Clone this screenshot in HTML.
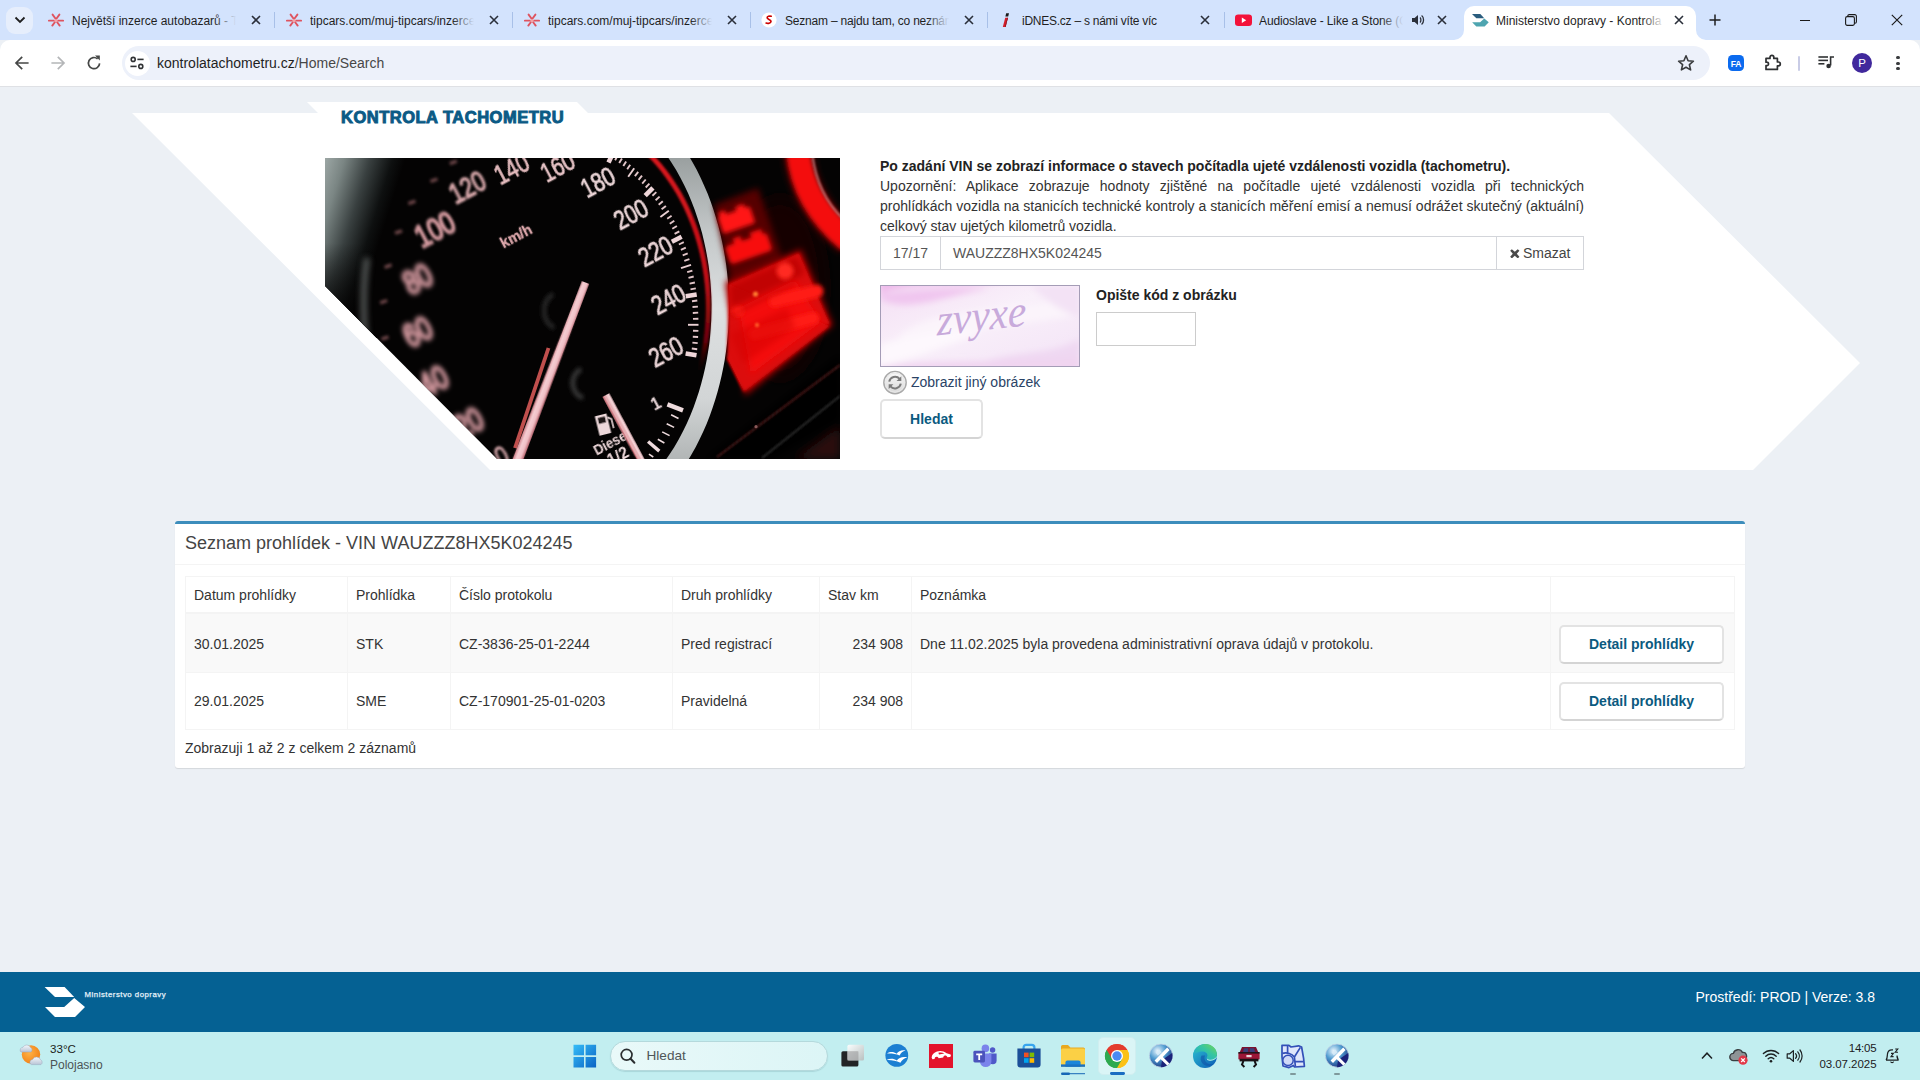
<!DOCTYPE html>
<html lang="cs">
<head>
<meta charset="utf-8">
<title>Ministerstvo dopravy - Kontrola tachometru</title>
<style>
*{box-sizing:border-box;margin:0;padding:0}
html,body{width:1920px;height:1080px;overflow:hidden;background:#ecf0f5;font-family:"Liberation Sans",sans-serif;font-size:14px;color:#333}
.abs{position:absolute}
#root{position:absolute;left:0;top:0;width:1920px;height:1080px;overflow:hidden}
/* ---------- browser chrome ---------- */
#tabbar{left:0;top:0;width:1920px;height:40px;background:#d3e3fd}
#toolbar{left:0;top:40px;width:1920px;height:46px;background:#fff;border-radius:10px 10px 0 0}
#tbline{left:0;top:86px;width:1920px;height:1px;background:#dfe1e5}
#omni{left:122px;top:46px;width:1588px;height:34px;border-radius:17px;background:#edf1fa}
#omni .site{left:2.5px;top:4.5px;width:25px;height:25px;border-radius:13px;background:#fff}
.tabtxt{top:13px;font-size:12px;line-height:16px;color:#1f1f1f;white-space:nowrap;overflow:hidden;height:16px}
.tabsep{top:12px;width:1px;height:16px;background:#a8c0e8}
#acttab{left:1464px;top:6px;width:232px;height:34px;background:#fff;border-radius:10px 10px 0 0}
.dot{left:1896.4px;width:3.2px;height:3.2px;border-radius:2px;background:#3a3c3e}
.url{left:157px;top:54px;font-size:14px;line-height:18px;color:#1f1f1f;white-space:nowrap}
/* ---------- page ---------- */
#page{left:0;top:87px;width:1920px;height:945px;background:#ecf0f5}
.t14{font-size:14px;line-height:20px;color:#333;white-space:nowrap}
.vl{top:577px;width:1px;height:152px;background:#f4f4f4}
.dbtn{left:1559px;width:165px;height:39px;border:2px solid #e3e3e3;border-bottom-color:#d4d4d4;border-radius:5px;background:#fff}
.dtx{left:1559px;width:165px;text-align:center;font-weight:bold;color:#0b5a7f}
/* ---------- footer / taskbar ---------- */
#footer{left:0;top:972px;width:1920px;height:60px;background:#056193}
#taskbar{left:0;top:1032px;width:1920px;height:48px;background:#c2eef0}
</style>
</head>
<body>
<div id="root">

<!-- ================= TAB BAR ================= -->
<div id="tabbar" class="abs"></div>
<div class="abs" style="left:6px;top:7px;width:27px;height:27px;border-radius:9px;background:#e6eefc"></div>
<div id="acttab" class="abs"></div>
<div id="toolbar" class="abs"></div>
<div id="tbline" class="abs"></div>
<div id="omni" class="abs"><div class="abs site"></div></div>
<div class="abs url">kontrolatachometru.cz<span style="color:#474747">/Home/Search</span></div>

<svg class="abs" style="left:14px;top:16px" width="12" height="8" viewBox="0 0 12 8"><path d="M1.5 1.5 L6 6 L10.5 1.5" stroke="#1f1f1f" stroke-width="1.8" fill="none"/></svg>
<svg class="abs" style="left:48px;top:12px" width="16" height="16" viewBox="0 0 16 16"><g stroke="#de5460" stroke-width="1.9" stroke-linecap="round" fill="none"><path d="M4.6 2.6 L8 7.2 L11.4 2.6"/><path d="M0.9 8.6 L6 8.6"/><path d="M10 8.6 L15.1 8.6"/><path d="M7 10 L4.3 13.6"/><path d="M9 10 L11.7 13.6"/></g><circle cx="8" cy="8.7" r="1.6" fill="#f3a4a8"/></svg>
<div id="tt1" class="abs tabtxt" style="left:72px;width:168px;letter-spacing:0px">Největší inzerce autobazarů - Tip</div>
<div class="abs" style="left:214px;top:10px;width:26px;height:20px;background:linear-gradient(to right,rgba(211,227,253,0),rgba(211,227,253,1) 85%)"></div>
<svg class="abs" style="left:251px;top:15px" width="10" height="10" viewBox="0 0 10 10"><path d="M1 1 L9 9 M9 1 L1 9" stroke="#2a2f3a" stroke-width="1.6" fill="none"/></svg>
<div class="abs tabsep" style="left:274px"></div>
<svg class="abs" style="left:286px;top:12px" width="16" height="16" viewBox="0 0 16 16"><g stroke="#de5460" stroke-width="1.9" stroke-linecap="round" fill="none"><path d="M4.6 2.6 L8 7.2 L11.4 2.6"/><path d="M0.9 8.6 L6 8.6"/><path d="M10 8.6 L15.1 8.6"/><path d="M7 10 L4.3 13.6"/><path d="M9 10 L11.7 13.6"/></g><circle cx="8" cy="8.7" r="1.6" fill="#f3a4a8"/></svg>
<div id="tt2" class="abs tabtxt" style="left:310px;width:168px;letter-spacing:0px">tipcars.com/muj-tipcars/inzerce/</div>
<div class="abs" style="left:452px;top:10px;width:26px;height:20px;background:linear-gradient(to right,rgba(211,227,253,0),rgba(211,227,253,1) 85%)"></div>
<svg class="abs" style="left:489px;top:15px" width="10" height="10" viewBox="0 0 10 10"><path d="M1 1 L9 9 M9 1 L1 9" stroke="#2a2f3a" stroke-width="1.6" fill="none"/></svg>
<div class="abs tabsep" style="left:512px"></div>
<svg class="abs" style="left:524px;top:12px" width="16" height="16" viewBox="0 0 16 16"><g stroke="#de5460" stroke-width="1.9" stroke-linecap="round" fill="none"><path d="M4.6 2.6 L8 7.2 L11.4 2.6"/><path d="M0.9 8.6 L6 8.6"/><path d="M10 8.6 L15.1 8.6"/><path d="M7 10 L4.3 13.6"/><path d="M9 10 L11.7 13.6"/></g><circle cx="8" cy="8.7" r="1.6" fill="#f3a4a8"/></svg>
<div class="abs tabtxt" style="left:548px;width:168px;letter-spacing:0px">tipcars.com/muj-tipcars/inzerce/</div>
<div class="abs" style="left:690px;top:10px;width:26px;height:20px;background:linear-gradient(to right,rgba(211,227,253,0),rgba(211,227,253,1) 85%)"></div>
<svg class="abs" style="left:727px;top:15px" width="10" height="10" viewBox="0 0 10 10"><path d="M1 1 L9 9 M9 1 L1 9" stroke="#2a2f3a" stroke-width="1.6" fill="none"/></svg>
<div class="abs tabsep" style="left:750px"></div>
<svg class="abs" style="left:761px;top:12px" width="16" height="16" viewBox="0 0 16 16"><circle cx="8" cy="8" r="7.6" fill="#fff"/><path d="M10.6 3.6 C8.6 3 5.6 3.8 5.8 5.6 C6 7.4 10.6 7.4 10.4 9.8 C10.2 12 6.6 12.4 4.6 11.6" stroke="#cc0000" stroke-width="1.9" fill="none" stroke-linecap="round" transform="translate(1.2,1.2) scale(0.85)"/></svg>
<div id="tt4" class="abs tabtxt" style="left:785px;width:168px;letter-spacing:-0.2px">Seznam – najdu tam, co neznám</div>
<div class="abs" style="left:927px;top:10px;width:26px;height:20px;background:linear-gradient(to right,rgba(211,227,253,0),rgba(211,227,253,1) 85%)"></div>
<svg class="abs" style="left:964px;top:15px" width="10" height="10" viewBox="0 0 10 10"><path d="M1 1 L9 9 M9 1 L1 9" stroke="#2a2f3a" stroke-width="1.6" fill="none"/></svg>
<div class="abs tabsep" style="left:987px"></div>
<svg class="abs" style="left:998px;top:12px" width="16" height="16" viewBox="0 0 16 16"><path d="M7.2 5.8 L10 5.8 L7.6 15 L4.8 15 Z" fill="#d21e2b"/><path d="M8.2 1.2 L11 1.2 L10.2 4.4 L7.4 4.4 Z" fill="#1a1a1a"/><path d="M9.4 5.8 L10 5.8 L7.6 15 L7 15 Z" fill="#7a0f18"/></svg>
<div id="tt5" class="abs tabtxt" style="left:1022px;width:170px;letter-spacing:-0.25px">iDNES.cz – s námi víte víc</div>
<svg class="abs" style="left:1200px;top:15px" width="10" height="10" viewBox="0 0 10 10"><path d="M1 1 L9 9 M9 1 L1 9" stroke="#2a2f3a" stroke-width="1.6" fill="none"/></svg>
<div class="abs tabsep" style="left:1224px"></div>
<svg class="abs" style="left:1235px;top:12px" width="17" height="16" viewBox="0 0 17 16"><rect x="0" y="2.4" width="17" height="11.6" rx="3.2" fill="#f3123a"/><path d="M6.8 5.4 L11.2 8.2 L6.8 11 Z" fill="#fff"/></svg>
<div id="tt6" class="abs tabtxt" style="left:1259px;width:146px;letter-spacing:-0.12px">Audioslave - Like a Stone (Official</div>
<div class="abs" style="left:1381px;top:10px;width:26px;height:20px;background:linear-gradient(to right,rgba(211,227,253,0),rgba(211,227,253,1) 85%)"></div>
<svg class="abs" style="left:1411px;top:13px" width="14" height="14" viewBox="0 0 14 14"><path d="M1 5 L3.6 5 L7 2 L7 12 L3.6 9 L1 9 Z" fill="#2a2f3a"/><path d="M9 4.6 C10.2 5.6 10.2 8.4 9 9.4" stroke="#2a2f3a" stroke-width="1.3" fill="none"/><path d="M10.6 2.6 C13.2 4.6 13.2 9.4 10.6 11.4" stroke="#2a2f3a" stroke-width="1.3" fill="none"/></svg>
<svg class="abs" style="left:1437px;top:15px" width="10" height="10" viewBox="0 0 10 10"><path d="M1 1 L9 9 M9 1 L1 9" stroke="#2a2f3a" stroke-width="1.6" fill="none"/></svg>
<svg class="abs" style="left:1454px;top:30px" width="10" height="10" viewBox="0 0 10 10"><path d="M10 0 L10 10 L0 10 A10 10 0 0 0 10 0 Z" fill="#fff"/></svg>
<svg class="abs" style="left:1696px;top:30px" width="10" height="10" viewBox="0 0 10 10"><path d="M0 0 L0 10 L10 10 A10 10 0 0 1 0 0 Z" fill="#fff"/></svg>
<svg class="abs" style="left:1472px;top:13.5px" width="17" height="13" viewBox="0 0 41 31"><polygon points="0,0 20,0 29.6,10 10.4,10" fill="#2a5d7e"/><polygon points="29.6,10.8 40.4,20 30.4,30 10.4,30 0.4,20 19.6,20" fill="#4ea5b0"/></svg>
<div id="tt7" class="abs tabtxt" style="left:1496px;width:172px;letter-spacing:0px">Ministerstvo dopravy - Kontrola tachometru</div>
<div class="abs" style="left:1642px;top:10px;width:26px;height:20px;background:linear-gradient(to right,rgba(255,255,255,0),rgba(255,255,255,1) 85%)"></div>
<svg class="abs" style="left:1674px;top:15px" width="10" height="10" viewBox="0 0 10 10"><path d="M1 1 L9 9 M9 1 L1 9" stroke="#2a2f3a" stroke-width="1.6" fill="none"/></svg>
<svg class="abs" style="left:1709px;top:14px" width="12" height="12" viewBox="0 0 12 12"><path d="M6 0.5 L6 11.5 M0.5 6 L11.5 6" stroke="#1f1f1f" stroke-width="1.5"/></svg>
<div class="abs" style="left:1800px;top:20px;width:10px;height:1px;background:#1a1a1a"></div>
<svg class="abs" style="left:1845px;top:14px" width="12" height="12" viewBox="0 0 12 12"><rect x="0.6" y="2.6" width="8.8" height="8.8" rx="1.6" fill="none" stroke="#1a1a1a" stroke-width="1.1"/><path d="M2.8 2.4 L2.8 2 A1.4 1.4 0 0 1 4.2 0.6 L9.8 0.6 A1.6 1.6 0 0 1 11.4 2.2 L11.4 7.8 A1.4 1.4 0 0 1 10 9.2 L9.6 9.2" fill="none" stroke="#1a1a1a" stroke-width="1.1"/></svg>
<svg class="abs" style="left:1891px;top:14px" width="12" height="12" viewBox="0 0 12 12"><path d="M0.8 0.8 L11.2 11.2 M11.2 0.8 L0.8 11.2" stroke="#1a1a1a" stroke-width="1.15"/></svg>
<svg class="abs" style="left:14px;top:55px" width="16" height="16" viewBox="0 0 16 16"><path d="M8.2 1.8 L2 8 L8.2 14.2 M2.2 8 L14.6 8" stroke="#454746" stroke-width="1.7" fill="none"/></svg>
<svg class="abs" style="left:50px;top:55px" width="16" height="16" viewBox="0 0 16 16"><path d="M7.8 1.8 L14 8 L7.8 14.2 M13.8 8 L1.4 8" stroke="#b4b6b8" stroke-width="1.7" fill="none"/></svg>
<svg class="abs" style="left:86px;top:54px" width="16" height="18" viewBox="0 0 16 18"><path d="M13.6 9.4 A5.6 5.6 0 1 1 11.6 4.8" stroke="#454746" stroke-width="1.7" fill="none"/><path d="M9 1.6 L13.8 1.6 L13.8 6.6 Z" fill="#454746"/></svg>
<svg class="abs" style="left:129px;top:55px" width="16" height="16" viewBox="0 0 16 16"><g stroke="#303234" stroke-width="1.6" fill="none"><circle cx="4.2" cy="4.4" r="2"/><path d="M8.4 4.4 L14.6 4.4"/><circle cx="11.8" cy="11.4" r="2"/><path d="M1.4 11.4 L7.6 11.4"/></g></svg>
<svg class="abs" style="left:1677px;top:54px" width="18" height="18" viewBox="0 0 18 18"><path d="M9 1.8 L11.1 6.7 L16.4 7.2 L12.4 10.7 L13.6 15.9 L9 13.2 L4.4 15.9 L5.6 10.7 L1.6 7.2 L6.9 6.7 Z" fill="none" stroke="#3a3c3e" stroke-width="1.6" stroke-linejoin="round"/></svg>
<div class="abs" style="left:1728px;top:55px;width:16px;height:16px;border-radius:4.5px;background:#0b6bef"></div><div class="abs" style="left:1728px;top:58.5px;width:16px;text-align:center;font-size:8.5px;line-height:10px;font-weight:bold;color:#fff;letter-spacing:-0.3px">FA</div>
<svg class="abs" style="left:1763px;top:53px" width="19" height="19" viewBox="0 0 19 19"><path d="M3 5.4 L7 5.4 L7 4.2 A1.9 1.9 0 0 1 10.8 4.2 L10.8 5.4 L14.4 5.4 L14.4 9 L15.4 9 A1.9 1.9 0 0 1 15.4 12.8 L14.4 12.8 L14.4 16.4 L3 16.4 L3 12.6 L3.8 12.6 A1.7 1.7 0 0 0 3.8 9.2 L3 9.2 Z" fill="none" stroke="#2e3032" stroke-width="1.7" stroke-linejoin="round"/></svg>
<div class="abs" style="left:1798px;top:56px;width:2px;height:15px;background:#c9cce6;border-radius:1px"></div>
<svg class="abs" style="left:1817px;top:54px" width="18" height="16" viewBox="0 0 18 16"><g stroke="#2e3032" stroke-width="1.6" fill="none"><path d="M1.4 3 L11 3"/><path d="M1.4 6.4 L11 6.4"/><path d="M1.4 9.8 L7.4 9.8"/><path d="M13.6 11.6 L13.6 3 L17 3"/></g><circle cx="11.6" cy="12" r="2.3" fill="#2e3032"/></svg>
<div class="abs" style="left:1852px;top:53px;width:20px;height:20px;border-radius:10px;background:#40289c"></div><div class="abs" style="left:1852px;top:56.5px;width:20px;text-align:center;font-size:11.5px;line-height:13px;color:#fff">P</div>
<div class="abs dot" style="top:56px"></div><div class="abs dot" style="top:61.5px"></div><div class="abs dot" style="top:67px"></div>

<!-- ================= PAGE ================= -->
<div id="page" class="abs"></div>

<!-- hero polygon -->
<svg class="abs" style="left:0;top:87px" width="1920" height="400" viewBox="0 87 1920 400">
  <polygon points="132,113 318,113 307,102 577,102 588,113 1609,113 1860,363 1753,470 490,470" fill="#ffffff"/>
</svg>

<!-- title -->
<div id="ttl" class="abs" style="left:341px;top:106px;font-size:16.5px;line-height:22px;font-weight:bold;color:#0b5a85;white-space:nowrap;-webkit-text-stroke:0.95px #0b5a85;letter-spacing:0.5px">KONTROLA TACHOMETRU</div>

<!--SPEEDO_START-->
<svg class="abs" style="left:325px;top:158px" width="515" height="301" viewBox="0 0 515 301" font-family="Liberation Sans, sans-serif">
  <defs>
    <clipPath id="sc"><polygon points="0,0 515,0 515,301 172,301 0,128"/></clipPath>
    <filter id="b03" filterUnits="userSpaceOnUse" x="-300" y="-300" width="1100" height="900"><feGaussianBlur stdDeviation="0.4"/></filter>
    <filter id="b04" filterUnits="userSpaceOnUse" x="-300" y="-300" width="1100" height="900"><feGaussianBlur stdDeviation="0.55"/></filter>
    <filter id="b06" filterUnits="userSpaceOnUse" x="-300" y="-300" width="1100" height="900"><feGaussianBlur stdDeviation="0.75"/></filter>
    <filter id="b10" filterUnits="userSpaceOnUse" x="-300" y="-300" width="1100" height="900"><feGaussianBlur stdDeviation="1.1"/></filter>
    <filter id="b16" filterUnits="userSpaceOnUse" x="-300" y="-300" width="1100" height="900"><feGaussianBlur stdDeviation="1.6"/></filter>
    <filter id="b20" filterUnits="userSpaceOnUse" x="-300" y="-300" width="1100" height="900"><feGaussianBlur stdDeviation="2"/></filter>
    <filter id="b25" filterUnits="userSpaceOnUse" x="-300" y="-300" width="1100" height="900"><feGaussianBlur stdDeviation="2.5"/></filter>
    <filter id="b30" filterUnits="userSpaceOnUse" x="-300" y="-300" width="1100" height="900"><feGaussianBlur stdDeviation="3"/></filter>
    <filter id="b50" filterUnits="userSpaceOnUse" x="-300" y="-300" width="1100" height="900"><feGaussianBlur stdDeviation="5"/></filter>
    <filter id="b80" filterUnits="userSpaceOnUse" x="-300" y="-300" width="1100" height="900"><feGaussianBlur stdDeviation="9"/></filter>
    <linearGradient id="gtl" gradientUnits="userSpaceOnUse" x1="-3" y1="-2" x2="74" y2="22">
      <stop offset="0" stop-color="#a3adab"/><stop offset="0.28" stop-color="#7a8583"/><stop offset="0.58" stop-color="#394040"/><stop offset="0.85" stop-color="#0e1010"/><stop offset="1" stop-color="#040303"/>
    </linearGradient>
    <linearGradient id="gtl2" gradientUnits="userSpaceOnUse" x1="0" y1="85" x2="0" y2="175">
      <stop offset="0" stop-color="#040303" stop-opacity="0"/><stop offset="1" stop-color="#040303"/>
    </linearGradient>
    <linearGradient id="gring" gradientUnits="userSpaceOnUse" x1="0" y1="0" x2="0" y2="301">
      <stop offset="0" stop-color="#9aa0a0"/><stop offset="0.25" stop-color="#c4c8c9"/><stop offset="0.5" stop-color="#dde0e1"/><stop offset="0.8" stop-color="#d2d5d6"/><stop offset="1" stop-color="#b2b6b6"/>
    </linearGradient>
    <linearGradient id="gred" gradientUnits="userSpaceOnUse" x1="0" y1="0" x2="0" y2="215">
      <stop offset="0" stop-color="#dc161e"/><stop offset="0.55" stop-color="#c40e16"/><stop offset="0.85" stop-color="#6a0408"/><stop offset="1" stop-color="#200000" stop-opacity="0"/>
    </linearGradient>
    <linearGradient id="gneedle" gradientUnits="userSpaceOnUse" x1="-4.6" y1="0" x2="4.6" y2="0">
      <stop offset="0" stop-color="#d48a92"/><stop offset="0.3" stop-color="#f4cdd2"/><stop offset="0.7" stop-color="#f0bfc5"/><stop offset="1" stop-color="#c0707a"/>
    </linearGradient>
  </defs>
  <g clip-path="url(#sc)">
    <rect width="515" height="301" fill="#040303"/>
    <!-- right side dark red ambient -->
    <ellipse cx="455" cy="130" rx="45" ry="90" fill="#160101" filter="url(#b80)"/>
    <!-- top-left grey sheen -->
    <rect x="0" y="0" width="160" height="180" fill="url(#gtl)"/>
    <rect x="0" y="0" width="160" height="180" fill="url(#gtl2)"/>
    <!-- left far side of ring (blurred, dim) -->
    <path d="M42 100 C 36 140 38 190 50 232" fill="none" stroke="#6a6f6e" stroke-width="6" filter="url(#b30)" opacity="0.8"/>
    <!-- silver ring (right side only) -->
    <polygon points="362.7,-4.0 367.4,3.9 371.7,11.8 375.6,19.8 379.2,27.7 382.6,35.6 385.6,43.5 388.4,51.5 390.9,59.4 393.2,67.3 395.2,75.2 397.0,83.2 398.6,91.1 400.0,99.0 401.2,106.9 402.1,114.8 402.9,122.8 403.4,130.7 403.8,138.6 404.0,146.5 404.0,154.5 403.7,162.4 403.3,170.3 402.7,178.2 401.9,186.2 400.9,194.1 399.7,202.0 398.2,209.9 396.6,217.8 394.7,225.8 392.6,233.7 390.3,241.6 387.7,249.5 384.9,257.5 381.8,265.4 378.4,273.3 374.6,281.2 370.6,289.2 366.2,297.1 361.4,305.0 338.5,305.0 344.1,297.1 349.2,289.2 353.8,281.2 358.0,273.3 361.8,265.4 365.3,257.5 368.5,249.5 371.3,241.6 373.9,233.7 376.2,225.8 378.3,217.8 380.1,209.9 381.7,202.0 383.0,194.1 384.2,186.2 385.1,178.2 385.7,170.3 386.2,162.4 386.4,154.5 386.5,146.5 386.3,138.6 385.9,130.7 385.3,122.8 384.5,114.8 383.5,106.9 382.2,99.0 380.7,91.1 379.0,83.2 377.1,75.2 374.8,67.3 372.3,59.4 369.6,51.5 366.5,43.5 363.2,35.6 359.5,27.7 355.4,19.8 351.0,11.8 346.1,3.9 340.7,-4.0" fill="url(#gring)" filter="url(#b03)"/>
    <!-- red inner line -->
    <path d="M324.0 -4.0 L329.4 1.6 L334.3 7.2 L338.8 12.8 L343.0 18.5 L346.9 24.1 L350.5 29.7 L353.9 35.3 L357.0 40.9 L359.9 46.5 L362.6 52.2 L365.0 57.8 L367.3 63.4 L369.5 69.0 L371.4 74.6 L373.2 80.2 L374.8 85.8 L376.3 91.5 L377.6 97.1 L378.8 102.7 L379.8 108.3 L380.7 113.9 L381.5 119.5 L382.1 125.2 L382.6 130.8 L383.0 136.4 L383.2 142.0 L383.3 147.6 L383.3 153.2 L383.1 158.8 L382.8 164.5 L382.4 170.1 L381.8 175.7 L381.1 181.3 L380.3 186.9 L379.3 192.5 L378.2 198.2 L377.0 203.8 L375.6 209.4 L374.0 215.0" fill="none" stroke="url(#gred)" stroke-width="5" filter="url(#b10)"/>
    <!-- ticks -->
    <g filter="url(#b03)">
    <line x1="265.7" y1="-16.6" x2="262.6" y2="-6.6" stroke="#ead0d3" stroke-width="1.9"/>
    <line x1="270.3" y1="-14.7" x2="268.6" y2="-9.6" stroke="#e2c6c9" stroke-width="1.9"/>
    <line x1="274.9" y1="-12.7" x2="273.0" y2="-7.6" stroke="#e2c6c9" stroke-width="1.9"/>
    <line x1="279.5" y1="-10.4" x2="277.4" y2="-5.4" stroke="#e2c6c9" stroke-width="1.9"/>
    <line x1="283.9" y1="-8.0" x2="281.7" y2="-3.1" stroke="#e2c6c9" stroke-width="1.9"/>
    <line x1="288.3" y1="-5.4" x2="283.5" y2="4.5" stroke="#efd6d9" stroke-width="4.6"/>
    <line x1="292.7" y1="-2.6" x2="290.1" y2="2.2" stroke="#e2c6c9" stroke-width="1.9"/>
    <line x1="296.9" y1="0.4" x2="294.2" y2="5.0" stroke="#e2c6c9" stroke-width="1.9"/>
    <line x1="301.1" y1="3.5" x2="298.3" y2="8.1" stroke="#e2c6c9" stroke-width="1.9"/>
    <line x1="305.2" y1="6.8" x2="302.2" y2="11.3" stroke="#e2c6c9" stroke-width="1.9"/>
    <line x1="309.2" y1="10.2" x2="303.2" y2="18.8" stroke="#ead0d3" stroke-width="1.9"/>
    <line x1="313.2" y1="13.8" x2="309.9" y2="18.1" stroke="#e2c6c9" stroke-width="1.9"/>
    <line x1="317.0" y1="17.6" x2="313.6" y2="21.8" stroke="#e2c6c9" stroke-width="1.9"/>
    <line x1="320.7" y1="21.5" x2="317.2" y2="25.6" stroke="#e2c6c9" stroke-width="1.9"/>
    <line x1="324.4" y1="25.6" x2="320.7" y2="29.5" stroke="#e2c6c9" stroke-width="1.9"/>
    <line x1="327.9" y1="29.8" x2="320.2" y2="37.6" stroke="#efd6d9" stroke-width="4.6"/>
    <line x1="331.3" y1="34.1" x2="327.4" y2="37.8" stroke="#e2c6c9" stroke-width="1.9"/>
    <line x1="334.6" y1="38.6" x2="330.6" y2="42.2" stroke="#e2c6c9" stroke-width="1.9"/>
    <line x1="337.8" y1="43.2" x2="333.7" y2="46.7" stroke="#e2c6c9" stroke-width="1.9"/>
    <line x1="340.9" y1="47.9" x2="336.6" y2="51.3" stroke="#e2c6c9" stroke-width="1.9"/>
    <line x1="343.8" y1="52.8" x2="335.4" y2="59.0" stroke="#ead0d3" stroke-width="1.9"/>
    <line x1="346.6" y1="57.8" x2="342.2" y2="60.8" stroke="#e2c6c9" stroke-width="1.9"/>
    <line x1="349.3" y1="62.8" x2="344.8" y2="65.8" stroke="#e2c6c9" stroke-width="1.9"/>
    <line x1="351.9" y1="68.0" x2="347.3" y2="70.8" stroke="#e2c6c9" stroke-width="1.9"/>
    <line x1="354.3" y1="73.3" x2="349.6" y2="75.9" stroke="#e2c6c9" stroke-width="1.9"/>
    <line x1="356.6" y1="78.7" x2="346.9" y2="83.7" stroke="#efd6d9" stroke-width="4.6"/>
    <line x1="358.8" y1="84.2" x2="353.9" y2="86.5" stroke="#e2c6c9" stroke-width="1.9"/>
    <line x1="360.8" y1="89.7" x2="355.9" y2="91.9" stroke="#e2c6c9" stroke-width="1.9"/>
    <line x1="362.7" y1="95.3" x2="357.7" y2="97.3" stroke="#e2c6c9" stroke-width="1.9"/>
    <line x1="364.4" y1="101.1" x2="359.3" y2="102.9" stroke="#e2c6c9" stroke-width="1.9"/>
    <line x1="366.0" y1="106.8" x2="356.0" y2="110.1" stroke="#ead0d3" stroke-width="1.9"/>
    <line x1="367.4" y1="112.6" x2="362.2" y2="114.2" stroke="#e2c6c9" stroke-width="1.9"/>
    <line x1="368.7" y1="118.5" x2="363.5" y2="119.9" stroke="#e2c6c9" stroke-width="1.9"/>
    <line x1="369.9" y1="124.5" x2="364.6" y2="125.6" stroke="#e2c6c9" stroke-width="1.9"/>
    <line x1="370.8" y1="130.4" x2="365.5" y2="131.4" stroke="#e2c6c9" stroke-width="1.9"/>
    <line x1="371.7" y1="136.5" x2="360.8" y2="138.2" stroke="#efd6d9" stroke-width="4.6"/>
    <line x1="372.3" y1="142.5" x2="367.0" y2="143.2" stroke="#e2c6c9" stroke-width="1.9"/>
    <line x1="372.9" y1="148.6" x2="367.5" y2="149.0" stroke="#e2c6c9" stroke-width="1.9"/>
    <line x1="373.2" y1="154.6" x2="367.8" y2="155.0" stroke="#e2c6c9" stroke-width="1.9"/>
    <line x1="373.4" y1="160.7" x2="368.0" y2="160.9" stroke="#e2c6c9" stroke-width="1.9"/>
    <line x1="373.5" y1="166.8" x2="363.0" y2="166.8" stroke="#ead0d3" stroke-width="1.9"/>
    <line x1="373.4" y1="172.9" x2="368.0" y2="172.7" stroke="#e2c6c9" stroke-width="1.9"/>
    <line x1="373.1" y1="179.0" x2="367.8" y2="178.7" stroke="#e2c6c9" stroke-width="1.9"/>
    <line x1="372.7" y1="185.1" x2="367.4" y2="184.6" stroke="#e2c6c9" stroke-width="1.9"/>
    <line x1="372.2" y1="191.2" x2="366.8" y2="190.5" stroke="#e2c6c9" stroke-width="1.9"/>
    <line x1="371.5" y1="197.2" x2="360.6" y2="195.4" stroke="#efd6d9" stroke-width="4.6"/>
    <line x1="342.4" y1="246.4" x2="358" y2="252.4" stroke="#efdcde" stroke-width="4.4"/>
    <line x1="346.1" y1="256.8" x2="353.5" y2="260.5" stroke="#efdcde" stroke-width="1.6"/>
    <line x1="341.7" y1="265.7" x2="349.1" y2="269.4" stroke="#efdcde" stroke-width="1.6"/>
    <line x1="337.2" y1="273.9" x2="344.6" y2="277.6" stroke="#efdcde" stroke-width="1.6"/>
    <line x1="332.8" y1="281.3" x2="339.4" y2="285" stroke="#efdcde" stroke-width="1.6"/>
    <line x1="323.1" y1="283.5" x2="334.3" y2="293.1" stroke="#efdcde" stroke-width="3.4"/>
    <line x1="323.9" y1="296.1" x2="328.3" y2="299" stroke="#efdcde" stroke-width="1.5"/>
    </g>
    <g filter="url(#b16)"><line x1="83.4" y1="45.6" x2="90.4" y2="43.2" stroke="#6e464a" stroke-width="3.4"/><line x1="70.0" y1="75.2" x2="77.0" y2="72.8" stroke="#6e464a" stroke-width="3.4"/><line x1="59.6" y1="109.3" x2="66.6" y2="106.9" stroke="#6e464a" stroke-width="3.4"/><line x1="55.2" y1="144.9" x2="62.2" y2="142.5" stroke="#6e464a" stroke-width="3.4"/><line x1="105.5" y1="23.4" x2="112.5" y2="21.0" stroke="#6e464a" stroke-width="3.4"/><line x1="124.8" y1="5.6" x2="131.8" y2="3.2" stroke="#6e464a" stroke-width="3.4"/><line x1="56.5" y1="181.2" x2="63.5" y2="178.8" stroke="#6e464a" stroke-width="3.4"/><line x1="64.5" y1="213.2" x2="71.5" y2="210.8" stroke="#6e464a" stroke-width="3.4"/></g>
    <!-- numbers -->
    <text transform="translate(147,38) rotate(-28) scale(0.77,1)" font-size="29" text-anchor="middle" fill="#d9a9ac" stroke="#d9a9ac" stroke-width="1.4" filter="url(#b10)">120</text>
    <text transform="translate(191,19) rotate(-28) scale(0.77,1)" font-size="27.5" text-anchor="middle" fill="#e2b9bc" stroke="#e2b9bc" stroke-width="0.8" filter="url(#b06)">140</text>
    <text transform="translate(237,17) rotate(-28) scale(0.77,1)" font-size="27" text-anchor="middle" fill="#e8c4c7" stroke="#e8c4c7" stroke-width="0.7" filter="url(#b04)">160</text>
    <text transform="translate(277.3,32.5) rotate(-28) scale(0.77,1)" font-size="27" text-anchor="middle" fill="#ecd6d8" stroke="#ecd6d8" stroke-width="0.75" filter="url(#b03)">180</text>
    <text transform="translate(310.3,64.5) rotate(-28) scale(0.77,1)" font-size="27" text-anchor="middle" fill="#ecd6d8" stroke="#ecd6d8" stroke-width="0.75" filter="url(#b03)">200</text>
    <text transform="translate(334.8,101.5) rotate(-28) scale(0.77,1)" font-size="27" text-anchor="middle" fill="#ecd6d8" stroke="#ecd6d8" stroke-width="0.75" filter="url(#b03)">220</text>
    <text transform="translate(347.8,149.5) rotate(-28) scale(0.77,1)" font-size="27" text-anchor="middle" fill="#ecd6d8" stroke="#ecd6d8" stroke-width="0.75" filter="url(#b03)">240</text>
    <text transform="translate(345.3,202) rotate(-28) scale(0.77,1)" font-size="27" text-anchor="middle" fill="#ecd6d8" stroke="#ecd6d8" stroke-width="0.75" filter="url(#b03)">260</text>
    <text transform="translate(115,81) rotate(-28) scale(0.77,1)" font-size="32" text-anchor="middle" fill="#d49a9f" stroke="#d49a9f" stroke-width="2.0" filter="url(#b16)">100</text>
    <text transform="translate(98,131) rotate(-28) scale(0.77,1)" font-size="33" text-anchor="middle" fill="#d59aa0" stroke="#d59aa0" stroke-width="2.8" filter="url(#b25)">80</text>
    <text transform="translate(98,184) rotate(-28) scale(0.77,1)" font-size="33" text-anchor="middle" fill="#d59aa0" stroke="#d59aa0" stroke-width="2.8" filter="url(#b25)">60</text>
    <text transform="translate(114,233) rotate(-28) scale(0.77,1)" font-size="33" text-anchor="middle" fill="#d59aa0" stroke="#d59aa0" stroke-width="2.8" filter="url(#b25)">40</text>
    <text transform="translate(149,275) rotate(-28) scale(0.77,1)" font-size="33" text-anchor="middle" fill="#d59aa0" stroke="#d59aa0" stroke-width="2.8" filter="url(#b25)">20</text>
    <text transform="translate(181,306) rotate(-28) scale(0.77,1)" font-size="28" text-anchor="middle" fill="#d8a9ad" stroke="#d8a9ad" stroke-width="0.9" filter="url(#b10)">0</text>
    <text transform="translate(193.5,82.5) rotate(-28) scale(1,1)" font-size="14.5" text-anchor="middle" fill="#dba6aa" stroke="#dba6aa" stroke-width="0.4" font-weight="bold" filter="url(#b06)">km/h</text>
    <text transform="translate(333.5,250.5) rotate(-28) scale(1,1)" font-size="16.5" text-anchor="middle" fill="#efdcde" stroke="#efdcde" stroke-width="0.5" filter="url(#b03)">1</text>
    <text transform="translate(289,288.5) rotate(-28) scale(0.95,1)" font-size="14" text-anchor="middle" fill="#efd9db" font-weight="bold" filter="url(#b04)">Diesel</text>
    <text transform="translate(295.5,303) rotate(-28) scale(0.95,1)" font-size="16.5" text-anchor="middle" fill="#efd9db" font-weight="bold" filter="url(#b04)">1/2</text>
    <!-- hubs -->
    <path d="M228 136 A 20 20 0 0 0 229 170" fill="none" stroke="#2e2e2e" stroke-width="4" filter="url(#b20)"/>
    <path d="M256 211 A 16 16 0 0 0 258 240" fill="none" stroke="#3c3c3c" stroke-width="4.5" filter="url(#b20)"/>
    <!-- red reflection needle -->
    <line x1="223.5" y1="190" x2="190" y2="290" stroke="#c0504e" stroke-width="3.8" filter="url(#b06)"/>
    <!-- main needle -->
    <g transform="translate(260.5,124.5) rotate(20.9)" filter="url(#b04)">
      <polygon points="-3.8,0 3.8,0 5.2,192 -5.2,192" fill="url(#gneedle)"/>
    </g>
    <!-- fuel needle -->
    <g transform="translate(281,237) rotate(-28)" filter="url(#b04)">
      <polygon points="-3.8,0 3.4,0 3.6,76 -3,76" fill="#e6adb2"/>
      <polygon points="-3.8,0 -2.6,0 -1.8,76 -3,76" fill="#c86a72"/>
      <polygon points="0.2,0 3.4,0 3.6,76 1.2,76" fill="#f3d0d4"/>
    </g>
    <!-- fuel pump icon -->
    <g transform="translate(278.5,266.5) rotate(-14)" filter="url(#b04)">
      <rect x="-6.5" y="-10" width="12" height="20" fill="#ecd8da"/><rect x="-4.2" y="-7.6" width="7.4" height="6" fill="#1a1212"/><path d="M5.5 -6 L9 -3.5 L9 6" fill="none" stroke="#ecd8da" stroke-width="1.6"/>
    </g>
    <!-- upper red block -->
    <polygon points="389,47 433,30 457,100 406,124" fill="#560202" filter="url(#b30)"/>
    <g transform="translate(411.5,62) rotate(-19)" filter="url(#b20)">
      <rect x="-17" y="-9" width="34" height="18" rx="3" fill="#ff1414"/>
      <rect x="-15" y="-13" width="7" height="6" fill="#ff1414"/><rect x="3" y="-13" width="9" height="6" fill="#ff1414"/>
    </g>
    <g transform="translate(423.5,90) rotate(-19)" filter="url(#b20)">
      <rect x="-22" y="-9" width="44" height="19" rx="4" fill="#f81010"/>
      <rect x="-12" y="-14" width="8" height="7" fill="#f81010"/><rect x="6" y="-14" width="12" height="7" fill="#f81010"/>
    </g>
    <!-- lower red block -->
    <polygon points="400,124 476,91 508,167 420,238" fill="#a00404" filter="url(#b30)"/>
    <polygon points="404,126 474,95 505,166 402,200 419,234" fill="#dc0808" filter="url(#b16)"/>
    <polygon points="404,126 402,200 419,234 505,168" fill="#dc0808" filter="url(#b16)"/>
    <polygon points="414,150 470,122 496,164 426,216" fill="#f40c0c" filter="url(#b30)"/>
    <line x1="450" y1="143" x2="492" y2="133" stroke="#ff1a12" stroke-width="13" stroke-linecap="round" filter="url(#b20)"/>
    <line x1="430" y1="176" x2="488" y2="160" stroke="#ff1a12" stroke-width="12" stroke-linecap="round" filter="url(#b20)"/>
    <circle cx="413" cy="153" r="6" fill="#ff1a12" filter="url(#b20)"/>
    <polygon points="404,128 472,98 480,116 406,150" fill="#b80404" filter="url(#b30)" opacity="0.75"/>
    <circle cx="460" cy="113" r="8.5" fill="#ff2a20" filter="url(#b20)"/>
    <polygon points="405,176 418,206 470,170 462,150" fill="#d40606" filter="url(#b30)" opacity="0.5"/>
    <circle cx="430.5" cy="136" r="2.6" fill="#ff7a30" filter="url(#b10)"/>
    <circle cx="432" cy="167" r="2.2" fill="#ff5a28" filter="url(#b10)"/>
    <line x1="406" y1="158" x2="470" y2="126" stroke="#c00808" stroke-width="3" filter="url(#b20)" opacity="0.5"/>
    <!-- top-right red arc -->
    <path d="M473 -8 C 476 27 492 57 524 83" fill="none" stroke="#4a0000" stroke-width="30" filter="url(#b30)"/>
    <path d="M473 -8 C 476 27 492 57 524 83" fill="none" stroke="#f40e0e" stroke-width="24" filter="url(#b20)"/>
    <path d="M487 -6 C 490 22 502 48 524 66" fill="none" stroke="#d8b0b0" stroke-width="1.6" filter="url(#b10)" opacity="0.8"/>
    <!-- bottom right dark diagonal sheen -->
    <polygon points="380,301 515,196 515,262 448,301" fill="#020101" filter="url(#b30)"/>
    <line x1="392" y1="299" x2="515" y2="207" stroke="#4a1c1c" stroke-width="2" filter="url(#b10)"/>
    <circle cx="431" cy="268.7" r="1.6" fill="#8a5a5a" filter="url(#b06)"/>
    <line x1="437" y1="300" x2="515" y2="238" stroke="#2c2c2c" stroke-width="2.2" filter="url(#b10)"/>
    <polygon points="470,301 515,268 515,301" fill="#2a0909" filter="url(#b50)"/>
  </g>
</svg>
<!--SPEEDO_END-->

<!-- hero text -->
<div id="h1" class="abs t14" style="left:880px;top:156px;font-weight:bold;color:#222">Po zadání VIN se zobrazí informace o stavech počítadla ujeté vzdálenosti vozidla (tachometru).</div>
<div id="h2" class="abs t14" style="left:880px;top:176px;width:704px;white-space:normal;text-align:justify">Upozornění: Aplikace zobrazuje hodnoty zjištěné na počítadle ujeté vzdálenosti vozidla při technických prohlídkách vozidla na stanicích technické kontroly a stanicích měření emisí a nemusí odrážet skutečný (aktuální) celkový stav ujetých kilometrů vozidla.</div>

<!-- input group -->
<div class="abs" style="left:880px;top:236px;width:704px;height:34px;border:1px solid #d3d5da;background:#fff"></div>
<div class="abs" style="left:940px;top:236px;width:1px;height:34px;background:#d3d5da"></div>
<div class="abs" style="left:1496px;top:236px;width:1px;height:34px;background:#d3d5da"></div>
<div id="cnt" class="abs t14" style="left:893px;top:243px;color:#555">17/17</div>
<div id="vin" class="abs t14" style="left:953px;top:243px;color:#555">WAUZZZ8HX5K024245</div>
<svg class="abs" style="left:1510px;top:248.5px" width="9.6" height="9.6" viewBox="0 0 11 11"><path d="M2.1 0.2 L5.5 3.2 L8.9 0.2 L10.8 2.1 L7.8 5.5 L10.8 8.9 L8.9 10.8 L5.5 7.8 L2.1 10.8 L0.2 8.9 L3.2 5.5 L0.2 2.1 Z" fill="#4a4a4a"/></svg>
<div id="smz" class="abs t14" style="left:1523px;top:243px;color:#444">Smazat</div>

<!-- captcha -->
<svg class="abs" style="left:880px;top:285px" width="200" height="82" viewBox="0 0 200 82">
  <defs>
    <linearGradient id="cg1" x1="0" y1="0" x2="1" y2="1"><stop offset="0" stop-color="#f4dff4"/><stop offset="0.45" stop-color="#f9f0fa"/><stop offset="1" stop-color="#f3e3f6"/></linearGradient>
    <filter id="cb" x="-20%" y="-20%" width="140%" height="140%"><feGaussianBlur stdDeviation="3"/></filter>
    <clipPath id="cc"><rect x="0" y="0" width="200" height="82"/></clipPath>
  </defs>
  <rect x="0" y="0" width="200" height="82" fill="url(#cg1)"/>
  <g clip-path="url(#cc)" filter="url(#cb)">
    <path d="M0 8 C40 -6 80 2 120 -4 L130 -10 L0 -10 Z" fill="#eeb8ea"/>
    <path d="M0 14 C30 30 70 8 110 4 C80 0 30 6 0 8 Z" fill="#f0c6ef"/>
    <path d="M20 50 C60 20 120 30 200 10 L200 30 C140 40 80 40 20 70 Z" fill="#fbf4fb"/>
    <path d="M0 60 C30 50 70 40 100 48 C70 60 40 70 0 82 Z" fill="#fdf8fd"/>
    <path d="M90 82 C130 64 170 72 200 54 L200 82 Z" fill="#efd8f2"/>
    <path d="M0 82 C50 72 120 80 200 72 L200 86 L0 86 Z" fill="#f0d4f0"/>
    <path d="M150 0 C170 20 190 30 200 32 L200 0 Z" fill="#f3e2f5"/>
  </g>
  <text x="0" y="0" transform="translate(57,50.5) rotate(-6.5) skewX(-6)" font-family="Liberation Serif, serif" font-style="italic" font-size="44" fill="#c8aadb" textLength="90" lengthAdjust="spacingAndGlyphs">zvyxe</text>
  <rect x="0.5" y="0.5" width="199" height="81" fill="none" stroke="#a49cb6" stroke-width="1"/>
</svg>
<div id="lbl" class="abs t14" style="left:1096px;top:285px;font-weight:bold;color:#222">Opište kód z obrázku</div>
<div class="abs" style="left:1096px;top:312px;width:100px;height:34px;border:1px solid #ccc;background:#fff"></div>

<!-- refresh -->
<svg class="abs" style="left:882px;top:370px" width="26" height="26" viewBox="0 0 26 26">
  <defs><linearGradient id="rg" x1="0" y1="0" x2="0" y2="1"><stop offset="0" stop-color="#fafafa"/><stop offset="1" stop-color="#d8d8d8"/></linearGradient></defs>
  <circle cx="13" cy="12.6" r="11.2" fill="url(#rg)" stroke="#a9a9a9" stroke-width="1.4"/>
  <circle cx="13" cy="12.6" r="9.6" fill="none" stroke="#e9e9e9" stroke-width="1"/>
  <g fill="none" stroke="#7b7b7b" stroke-width="2" stroke-linecap="butt">
    <path d="M7.2 11.6 A6 6 0 0 1 17.6 8.9"/>
    <path d="M18.8 13.6 A6 6 0 0 1 8.4 16.3"/>
  </g>
  <path d="M19.3 6.2 L19.3 11 L14.6 11 Z" fill="#7b7b7b"/>
  <path d="M6.7 19 L6.7 14.2 L11.4 14.2 Z" fill="#7b7b7b"/>
</svg>
<div id="zob" class="abs t14" style="left:911px;top:372px;color:#2a4366">Zobrazit jiný obrázek</div>

<!-- Hledat button -->
<div class="abs" style="left:880px;top:399px;width:103px;height:40px;border:2px solid #e3e3e3;border-bottom-color:#d4d4d4;border-radius:5px;background:#fff"></div>
<div id="hled" class="abs t14" style="left:880px;top:409px;width:103px;text-align:center;font-weight:bold;color:#0b5a7f">Hledat</div>

<!-- results box -->
<div class="abs" style="left:175px;top:521px;width:1570px;height:247px;background:#fff;border-top:3px solid #3c8dbc;border-radius:3px;box-shadow:0 1px 1px rgba(0,0,0,0.1)"></div>
<div id="bt" class="abs" style="left:185px;top:532px;font-size:18px;line-height:22px;color:#444;white-space:nowrap">Seznam prohlídek - VIN WAUZZZ8HX5K024245</div>
<div class="abs" style="left:175px;top:564px;width:1570px;height:1px;background:#f4f4f4"></div>
<!-- table -->
<div class="abs" style="left:185px;top:576px;width:1550px;height:154px;border:1px solid #f4f4f4;background:#fff"></div>
<div class="abs" style="left:186px;top:614px;width:1548px;height:58px;background:#f9f9f9"></div>
<div class="abs" style="left:185px;top:612px;width:1550px;height:2px;background:#f4f4f4"></div>
<div class="abs" style="left:185px;top:672px;width:1550px;height:1px;background:#f4f4f4"></div>
<div class="abs vl" style="left:347px"></div><div class="abs vl" style="left:450px"></div><div class="abs vl" style="left:672px"></div><div class="abs vl" style="left:819px"></div><div class="abs vl" style="left:911px"></div><div class="abs vl" style="left:1550px"></div>
<div id="th1" class="abs t14" style="left:194px;top:585px">Datum prohlídky</div>
<div class="abs t14" style="left:356px;top:585px">Prohlídka</div>
<div class="abs t14" style="left:459px;top:585px">Číslo protokolu</div>
<div class="abs t14" style="left:681px;top:585px">Druh prohlídky</div>
<div class="abs t14" style="left:828px;top:585px">Stav km</div>
<div class="abs t14" style="left:920px;top:585px">Poznámka</div>
<div class="abs t14" style="left:194px;top:634px">30.01.2025</div>
<div class="abs t14" style="left:356px;top:634px">STK</div>
<div class="abs t14" style="left:459px;top:634px">CZ-3836-25-01-2244</div>
<div class="abs t14" style="left:681px;top:634px">Pred registrací</div>
<div id="km1" class="abs t14" style="left:820px;top:634px;width:83px;text-align:right">234 908</div>
<div id="note" class="abs t14" style="left:920px;top:634px">Dne 11.02.2025 byla provedena administrativní oprava údajů v protokolu.</div>
<div class="abs t14" style="left:194px;top:691px">29.01.2025</div>
<div class="abs t14" style="left:356px;top:691px">SME</div>
<div class="abs t14" style="left:459px;top:691px">CZ-170901-25-01-0203</div>
<div class="abs t14" style="left:681px;top:691px">Pravidelná</div>
<div class="abs t14" style="left:820px;top:691px;width:83px;text-align:right">234 908</div>
<div class="abs dbtn" style="top:625px"></div><div id="d1" class="abs t14 dtx" style="top:634px">Detail prohlídky</div>
<div class="abs dbtn" style="top:682px"></div><div class="abs t14 dtx" style="top:691px">Detail prohlídky</div>
<div id="info" class="abs t14" style="left:185px;top:738px">Zobrazuji 1 až 2 z celkem 2 záznamů</div>


<!-- ================= FOOTER ================= -->
<div id="footer" class="abs"></div>
<svg class="abs" style="left:40px;top:982px" width="50" height="40" viewBox="40 982 50 40"><polygon points="44.6,987.1 64.6,987.1 74.2,997.1 55,997.1" fill="#fff"/><polygon points="74.2,997.9 85,1007.1 75,1017.1 55,1017.1 45,1007.1 64.2,1007.1" fill="#fff"/></svg>
<div id="mdt" class="abs" style="left:84.6px;top:989.6px;font-size:7.8px;line-height:10px;color:#e4f1fa;white-space:nowrap;letter-spacing:0.5px;-webkit-text-stroke:0.25px #e4f1fa">Ministerstvo dopravy</div>
<div id="env" class="abs" style="left:1640px;top:987px;width:235px;text-align:right;font-size:14px;line-height:20px;color:#fff;white-space:nowrap">Prostředí: PROD | Verze: 3.8</div>
<div id="taskbar" class="abs"></div>
<!-- weather -->
<svg class="abs" style="left:16px;top:1040px" width="30" height="30" viewBox="0 0 30 30">
  <defs><radialGradient id="sun" cx="0.4" cy="0.4" r="0.7"><stop offset="0" stop-color="#ffb347"/><stop offset="1" stop-color="#f07d12"/></radialGradient>
  <linearGradient id="cl" x1="0" y1="0" x2="0" y2="1"><stop offset="0" stop-color="#f4f7fb"/><stop offset="1" stop-color="#b9c4d6"/></linearGradient></defs>
  <circle cx="15" cy="14.5" r="9.2" fill="url(#sun)"/>
  <path d="M4.4 11.4 A3 3 0 0 1 7 7.2 A4.2 4.2 0 0 1 14.6 7.6 A2.6 2.6 0 0 1 15 12 L5.4 12 Z" fill="url(#cl)" stroke="#9aa7bd" stroke-width="0.5"/>
  <path d="M14.4 24 A3 3 0 0 1 16.6 19.4 A4.4 4.4 0 0 1 24.6 19.8 A2.8 2.8 0 0 1 25 24.6 L15.4 24.6 Z" fill="url(#cl)" stroke="#9aa7bd" stroke-width="0.5"/>
</svg>
<div id="wt1" class="abs" style="left:50px;top:1041px;font-size:11.6px;line-height:15px;color:#1c1f21;white-space:nowrap">33°C</div>
<div id="wt2" class="abs" style="left:50px;top:1056.5px;font-size:12px;line-height:16px;color:#4c5456;white-space:nowrap">Polojasno</div>
<!-- start -->
<svg class="abs" style="left:573px;top:1044px" width="24" height="24" viewBox="0 0 24 24">
  <defs><linearGradient id="wg" x1="0" y1="0" x2="1" y2="1"><stop offset="0" stop-color="#35bdf8"/><stop offset="1" stop-color="#0a63c4"/></linearGradient></defs>
  <path d="M0.5 0.8 H11 V11.3 H0.5 Z M12.6 0.8 H23.1 V11.3 H12.6 Z M0.5 12.9 H11 V23.4 H0.5 Z M12.6 12.9 H23.1 V23.4 H12.6 Z" fill="url(#wg)"/>
</svg>
<!-- search -->
<div class="abs" style="left:610px;top:1041px;width:218px;height:30px;border-radius:15px;background:linear-gradient(to right,#e9f9f9,#dcf5f6);border:1px solid #b4d9dc;box-shadow:0 1px 1px rgba(60,110,120,0.18)"></div>
<svg class="abs" style="left:619px;top:1047px" width="18" height="18" viewBox="0 0 18 18"><circle cx="7.6" cy="7.8" r="5.4" fill="none" stroke="#2a2e30" stroke-width="1.7"/><path d="M11.6 11.8 L15.4 15.8" stroke="#2a2e30" stroke-width="2" stroke-linecap="round"/></svg>
<div id="srch" class="abs" style="left:646.5px;top:1047px;font-size:13.6px;line-height:18px;color:#4f5658;white-space:nowrap">Hledat</div>
<!-- task view -->
<svg class="abs" style="left:839px;top:1043px" width="28" height="26" viewBox="0 0 28 26">
  <defs><linearGradient id="tv1" x1="0" y1="0" x2="1" y2="1"><stop offset="0" stop-color="#ffffff"/><stop offset="1" stop-color="#b8bcbc"/></linearGradient></defs>
  <rect x="2.4" y="8.2" width="17" height="15.4" rx="1.6" fill="#222426"/>
  <rect x="8.4" y="1.8" width="16.6" height="15.8" rx="1.6" fill="url(#tv1)" opacity="0.93"/>
  <rect x="8.4" y="8.2" width="11" height="9.4" fill="#9c9fa0" opacity="0.55"/>
</svg>
<!-- openoffice -->
<svg class="abs" style="left:884px;top:1043px" width="26" height="26" viewBox="0 0 26 26">
  <circle cx="12.8" cy="12.4" r="11.4" fill="#1c7fd2"/>
  <path d="M3 10.6 C6.4 8.4 9.8 8.8 12.6 10.8 C14.6 8 17.6 6.8 21.6 7.6 C18.6 8.4 16.8 10 15.6 12.6 C11.8 10.8 7.4 10.4 3 10.6 Z" fill="#fff"/>
  <path d="M2.4 17 C6.4 15.2 10 15.6 12.8 17.6 C15 14.4 18.6 13.4 23.4 14.4 C19.8 15.2 17.8 17 16.4 19.8 C12.2 17.6 7.2 16.8 2.4 17 Z" fill="#fff"/>
</svg>
<!-- red car app -->
<svg class="abs" style="left:929px;top:1044px" width="24" height="24" viewBox="0 0 24 24">
  <rect width="24" height="24" fill="#e3132c"/>
  <path d="M2.6 13.4 C3 10.6 5 8.6 8 7.6 C11 6.6 14.6 7 17.6 9.2 L21.6 10.4 C22.2 11.4 21.8 12.6 20.8 13 L18.4 13.2 C17.6 11 14.8 11 14.2 13.4 L9.6 14.2 C8.6 12 5.6 12.4 5.6 15 L3.4 15.2 Z" fill="#fff"/>
  <path d="M9.4 8.8 C11.4 8.2 13.6 8.4 15.4 9.6 L10 10.6 Z" fill="#e3132c"/>
</svg>
<!-- teams -->
<svg class="abs" style="left:972px;top:1043px" width="26" height="26" viewBox="0 0 26 26">
  <circle cx="20.6" cy="7" r="2.7" fill="#5059c9"/><path d="M17 10.4 H24.6 V17.4 A3.8 3.8 0 0 1 17 17.4 Z" fill="#5059c9"/>
  <circle cx="13.4" cy="5.4" r="3.8" fill="#7b83eb"/><path d="M8 10.4 H19.4 V18.4 A5.7 5.7 0 0 1 8 18.4 Z" fill="#7b83eb"/>
  <rect x="1.4" y="7.8" width="11.6" height="11.6" rx="1.4" fill="#4b53bc"/>
  <path d="M4.2 10.6 H10.2 V12.2 H8.1 V17 H6.3 V12.2 H4.2 Z" fill="#fff"/>
</svg>
<!-- store -->
<svg class="abs" style="left:1016px;top:1042px" width="26" height="28" viewBox="0 0 26 28">
  <path d="M7.6 7 V5.4 A2.6 2.6 0 0 1 10.2 2.8 H15.8 A2.6 2.6 0 0 1 18.4 5.4 V7" fill="none" stroke="#38a5ee" stroke-width="2.2"/>
  <path d="M1.4 6.6 H24.6 V22.6 A3 3 0 0 1 21.6 25.6 H4.4 A3 3 0 0 1 1.4 22.6 Z" fill="#1b4f98"/>
  <rect x="8" y="10.6" width="4.6" height="4.6" fill="#f25022"/><rect x="13.6" y="10.6" width="4.6" height="4.6" fill="#7fba00"/><rect x="8" y="16.2" width="4.6" height="4.6" fill="#00a4ef"/><rect x="13.6" y="16.2" width="4.6" height="4.6" fill="#ffb900"/>
</svg>
<!-- explorer -->
<svg class="abs" style="left:1060px;top:1043px" width="26" height="34" viewBox="0 0 26 34">
  <path d="M1 3.6 A1.6 1.6 0 0 1 2.6 2 H8 L10.4 4.4 H23.4 A1.6 1.6 0 0 1 25 6 V8 H1 Z" fill="#e8a820"/>
  <rect x="1" y="5.4" width="24" height="18.4" rx="1.6" fill="#fbd045"/>
  <path d="M5.4 23.8 V19.4 A2 2 0 0 1 7.4 17.4 H18.6 A2 2 0 0 1 20.6 19.4 V23.8 Z" fill="#1b86da"/>
  <rect x="1" y="21.4" width="24" height="2.4" fill="#1972c4"/>
  <rect x="1" y="29.4" width="9" height="2.6" rx="1.3" fill="#1767b6"/><rect x="9" y="30.2" width="16" height="1" fill="#1767b6"/>
</svg>
<!-- chrome (active) -->
<div class="abs" style="left:1098px;top:1037px;width:38px;height:38px;border-radius:5px;background:#daf5f6;border:1px solid #d0eef0"></div>
<svg class="abs" style="left:1104px;top:1043px" width="26" height="26" viewBox="0 0 26 26">
  <circle cx="13" cy="13" r="12" fill="#fff"/>
  <path d="M13 13 L2.6 7 A12 12 0 0 1 23.4 7 Z" fill="#e33b2e"/>
  <path d="M13 13 L23.4 7 A12 12 0 0 1 13 25 Z" fill="#fbc116"/>
  <path d="M13 13 L13 25 A12 12 0 0 1 2.6 7 Z" fill="#2da94f"/>
  <path d="M13 7 H23.4 A12 12 0 0 0 2.6 7 L7.8 16 Z" fill="#e33b2e"/>
  <path d="M18.2 16 L13 25 A12 12 0 0 0 23.4 7 H13 Z" fill="#fbc116"/>
  <path d="M7.8 16 L2.6 7 A12 12 0 0 0 13 25 L18.2 16 Z" fill="#2da94f"/>
  <circle cx="13" cy="13" r="6" fill="#fff"/><circle cx="13" cy="13" r="4.7" fill="#4a8af4"/>
</svg>
<div class="abs" style="left:1110px;top:1072.4px;width:15px;height:2.8px;border-radius:1.4px;background:#1a6dc2"></div>
<!-- sphere app 1 -->
<svg class="abs sph" style="left:1148px;top:1043px" width="26" height="26" viewBox="0 0 26 26"><circle cx="13" cy="12.6" r="11.6" fill="url(#sg)" stroke="#c5d6e6" stroke-width="0.8"/>
  <path d="M13 24.2 A11.6 11.6 0 0 0 24.2 10 L14 17 Z" fill="#1a237a"/>
  <path d="M19.2 4.6 L21.6 7 L9 20 L6.6 17.6 Z" fill="#fff"/>
  <path d="M13.4 12.6 L21.4 20.4 L19.2 22.6 L11.2 14.8 Z" fill="#fff"/>
  <path d="M7.6 9.4 L11.4 6.6 L13.6 9.4 L9.8 12.4 Z" fill="#d9ecf8" opacity="0.85"/></svg>
<!-- edge -->
<svg class="abs" style="left:1192px;top:1043px" width="26" height="26" viewBox="0 0 26 26">
  <defs><linearGradient id="eg1" x1="0" y1="0" x2="1" y2="1"><stop offset="0" stop-color="#2bc3d2"/><stop offset="1" stop-color="#0c59b6"/></linearGradient>
  <linearGradient id="eg2" x1="0" y1="1" x2="1" y2="0"><stop offset="0" stop-color="#1a9fe0"/><stop offset="0.6" stop-color="#36c6a0"/><stop offset="1" stop-color="#7ad84e"/></linearGradient></defs>
  <circle cx="13" cy="13" r="12" fill="url(#eg1)"/>
  <path d="M1.2 11.4 C2.4 4.6 8 1 13.4 1 C20 1 25 6 25 11.6 C25 15.4 22.2 17.6 19 17.6 C16.4 17.6 14.6 16.4 14.6 15 C14.6 14 15.4 13.6 15.4 12.2 C15.4 10.2 13.4 8.4 10.6 8.4 C6.6 8.4 2.4 10.6 1.2 11.4 Z" fill="url(#eg2)"/>
  <path d="M25.4 12.6 C24.6 16.6 20.6 18.4 16.6 17.4 C15.4 17 14.8 16.2 14.8 15.4 C17.4 17.6 22.4 17.4 25.4 12.6 Z" fill="#c2eef0" opacity="0.9"/>
  <path d="M9.6 12.4 C8 14.8 8.4 18.6 11 21 C13.6 23.4 18.6 23.6 22.6 20.2 C20 22 16.4 21.6 14.4 19.6 C12.4 17.6 12 14.8 13 12.6 Z" fill="#0e4fa6" opacity="0.55"/>
</svg>
<!-- car on legs -->
<svg class="abs" style="left:1236px;top:1043px" width="26" height="26" viewBox="0 0 26 26">
  <path d="M6 4 H20 L22.4 9.4 H3.6 Z" fill="#7a1230"/><path d="M8 5.2 H12.2 V9 H7 Z M13.8 5.2 H18 L19 9 H13.8 Z" fill="#3a3f7a"/>
  <rect x="2.4" y="9.2" width="21.2" height="7.4" rx="1.2" fill="#9c1636"/><rect x="2.4" y="9" width="21.2" height="1.6" fill="#20141c"/>
  <rect x="10.4" y="12" width="5.2" height="2.2" fill="#e8d8dc"/>
  <rect x="3.6" y="15.8" width="18.8" height="2.6" fill="#1a1216"/>
  <path d="M7.4 18 L6 21.6 L8.4 24 M18.6 18 L20 21.6 L17.6 24" stroke="#141014" stroke-width="2" fill="none"/>
</svg>
<!-- map-like app -->
<svg class="abs" style="left:1280px;top:1043px" width="26" height="28" viewBox="0 0 26 28">
  <path d="M2 2.4 H9 L11 4 L18.6 2.8 L21.6 4 L23.6 15.4 L24.4 23.4 L14.6 24 L13.4 22.4 L9 24.6 L3 23 L2 14 Z" fill="#dfe6fb" stroke="#3350b8" stroke-width="1.7" stroke-linejoin="round"/>
  <path d="M7.6 2.6 V9.4 M2.4 10.4 C7 9 12 11 14.4 14 L20.4 4.4 M14.4 14 L15.4 23.6 M15 18.6 H23.6" stroke="#3350b8" stroke-width="1.7" fill="none"/>
  <circle cx="8" cy="17.4" r="5.2" fill="#cfd9f7" stroke="#3350b8" stroke-width="1.5"/>
</svg>
<div class="abs" style="left:1290px;top:1072.6px;width:6px;height:2.4px;border-radius:1.2px;background:#7f9a9c"></div>
<!-- sphere app 2 -->
<svg class="abs sph" style="left:1324px;top:1043px" width="26" height="26" viewBox="0 0 26 26"><circle cx="13" cy="12.6" r="11.6" fill="url(#sg)" stroke="#c5d6e6" stroke-width="0.8"/>
  <path d="M13 24.2 A11.6 11.6 0 0 0 24.2 10 L14 17 Z" fill="#1a237a"/>
  <path d="M19.2 4.6 L21.6 7 L9 20 L6.6 17.6 Z" fill="#fff"/>
  <path d="M13.4 12.6 L21.4 20.4 L19.2 22.6 L11.2 14.8 Z" fill="#fff"/>
  <path d="M7.6 9.4 L11.4 6.6 L13.6 9.4 L9.8 12.4 Z" fill="#d9ecf8" opacity="0.85"/></svg>
<div class="abs" style="left:1334px;top:1072.6px;width:6px;height:2.4px;border-radius:1.2px;background:#7f9a9c"></div>
<svg width="0" height="0" style="position:absolute"><defs>
  <radialGradient id="sg" cx="0.35" cy="0.3" r="0.8"><stop offset="0" stop-color="#eaf6fd"/><stop offset="0.45" stop-color="#4f9bd0"/><stop offset="1" stop-color="#152a78"/></radialGradient>
  </defs></svg>
<!-- tray -->
<svg class="abs" style="left:1701px;top:1051px" width="12" height="9" viewBox="0 0 12 9"><path d="M1 7.4 L6 2.2 L11 7.4" stroke="#1c2022" stroke-width="1.5" fill="none"/></svg>
<svg class="abs" style="left:1728px;top:1047px" width="22" height="20" viewBox="0 0 22 20"><path d="M5.4 13.6 A3.6 3.6 0 0 1 5.4 6.4 A4.8 4.8 0 0 1 14.4 5.4 A3.6 3.6 0 0 1 16 12.4 L15 13.6 Z" fill="#8e9496" stroke="#3a3f42" stroke-width="1.4"/><circle cx="15" cy="13.2" r="4.6" fill="#e23a4a"/><path d="M13.2 11.4 L16.8 15 M16.8 11.4 L13.2 15" stroke="#fff" stroke-width="1.3"/></svg>
<svg class="abs" style="left:1762px;top:1048px" width="18" height="16" viewBox="0 0 18 16"><g fill="none" stroke="#1c2022" stroke-width="1.4" stroke-linecap="round"><path d="M1.4 5.6 C5.6 1.4 12.4 1.4 16.6 5.6"/><path d="M3.8 8.2 C6.8 5.2 11.2 5.2 14.2 8.2"/><path d="M6.2 10.8 C7.8 9.2 10.2 9.2 11.8 10.8"/></g><circle cx="9" cy="13.2" r="1.3" fill="#1c2022"/></svg>
<svg class="abs" style="left:1786px;top:1048px" width="18" height="16" viewBox="0 0 18 16"><path d="M1.2 5.8 H3.8 L7.4 2.6 V13.4 L3.8 10.2 H1.2 Z" fill="none" stroke="#1c2022" stroke-width="1.2" stroke-linejoin="round"/><g fill="none" stroke="#1c2022" stroke-width="1.2" stroke-linecap="round"><path d="M9.6 5.6 C10.8 7 10.8 9 9.6 10.4"/><path d="M11.8 3.8 C13.8 6.2 13.8 9.8 11.8 12.2"/><path d="M14 2 C16.8 5.4 16.8 10.6 14 14"/></g></svg>
<div id="clk" class="abs" style="left:1800px;top:1040.5px;width:76.5px;text-align:right;font-size:11.5px;line-height:15px;color:#1c2022;white-space:nowrap;letter-spacing:-0.2px">14:05</div>
<div id="dat" class="abs" style="left:1800px;top:1056.8px;width:76.5px;text-align:right;font-size:11.5px;line-height:15px;color:#1c2022;white-space:nowrap;letter-spacing:-0.05px">03.07.2025</div>
<svg class="abs" style="left:1883px;top:1047px" width="18" height="18" viewBox="0 0 18 18"><path d="M3 13 C4.4 11.6 4.2 9.4 4.4 7.4 C4.6 4.6 6.4 2.8 9 2.8 L10 2.9 M14 9 C14 10.8 14.2 11.8 15.2 13 Z M3 13 H15.2" fill="none" stroke="#1c2022" stroke-width="1.25" stroke-linejoin="round"/><path d="M7.6 14.6 A1.6 1.6 0 0 0 10.6 14.6" fill="none" stroke="#1c2022" stroke-width="1.2"/><path d="M8 6.4 H10.4 L8 9.6 H10.6" fill="none" stroke="#1c2022" stroke-width="1.1"/><path d="M12.2 2 H14.8 L12.2 5.2 H15" fill="none" stroke="#1c2022" stroke-width="1.1"/></svg>

</div>
</body>
</html>
